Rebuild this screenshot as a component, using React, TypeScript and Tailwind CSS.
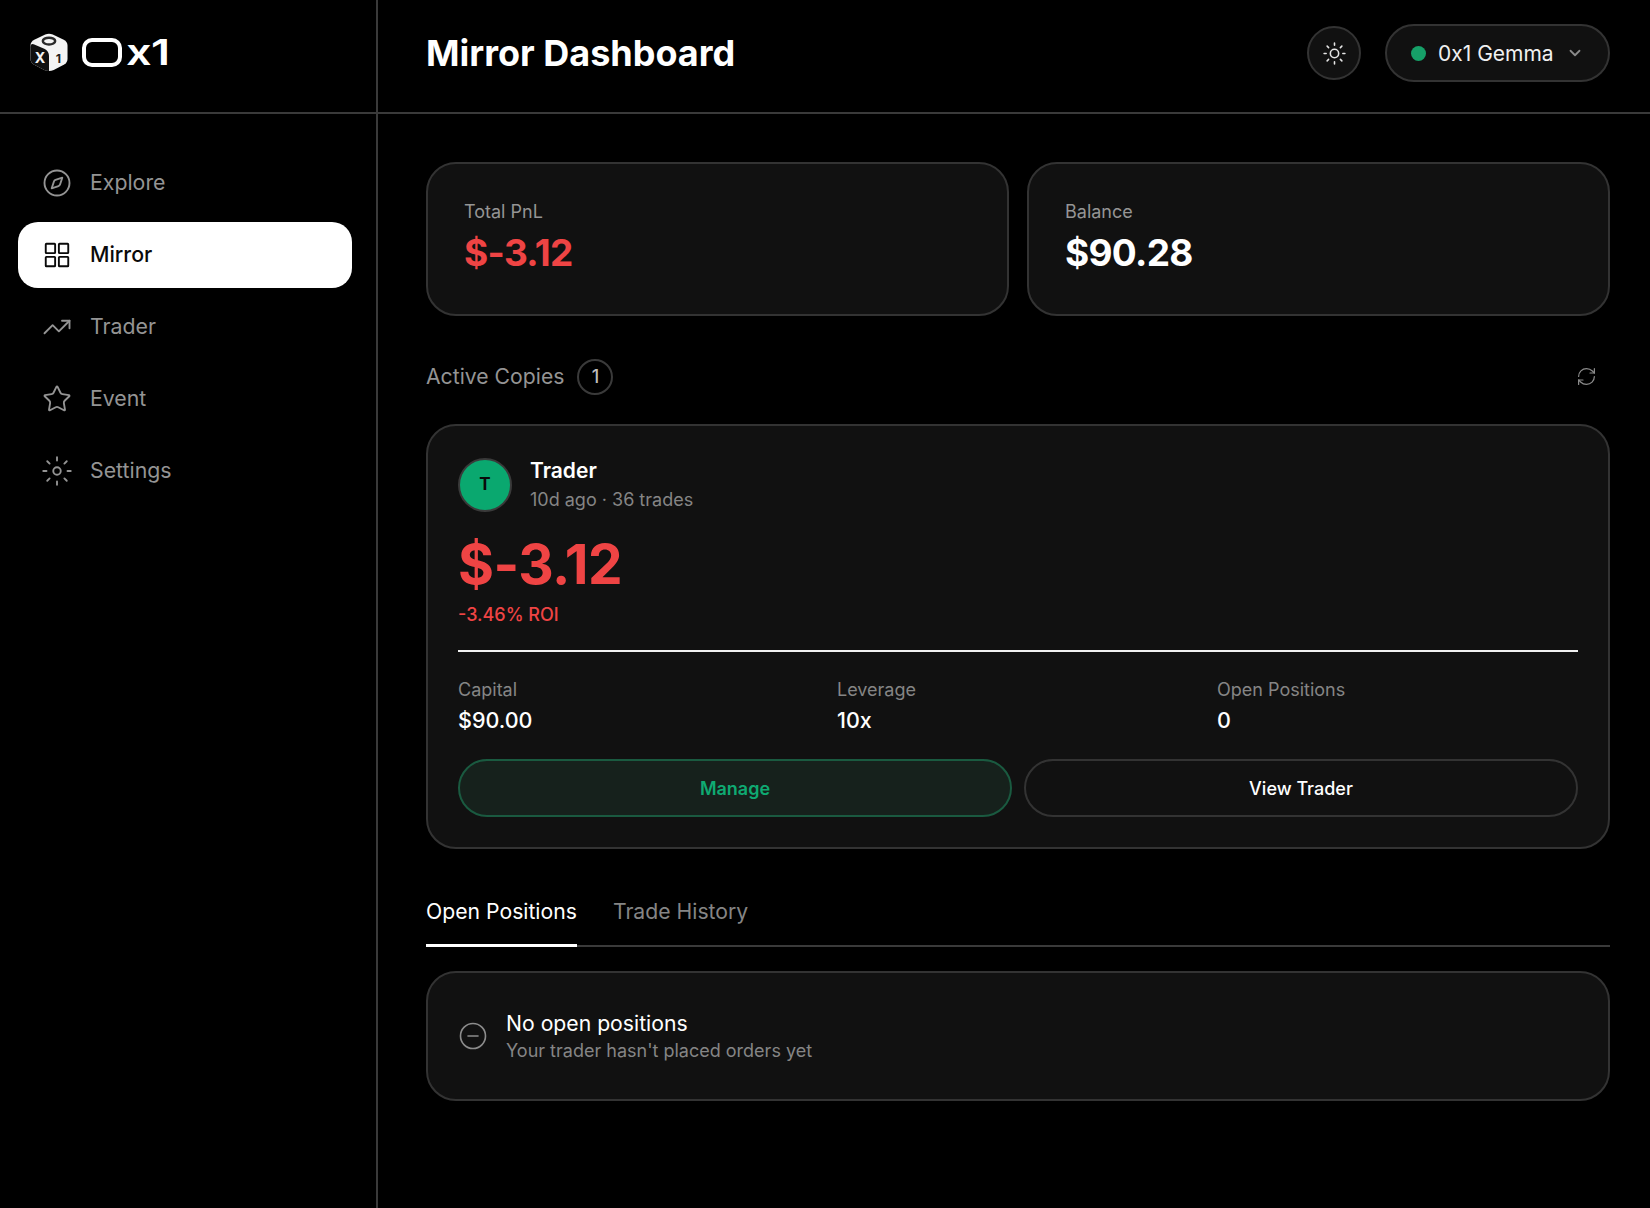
import React from "react";
import { Compass, TrendingUp, Star, Sun, ChevronDown, RefreshCw, CircleMinus } from "lucide-react";

type IconProps = { size?: number; strokeWidth?: number };

function GridIcon({ size = 30, strokeWidth = 1.5 }: IconProps) {
  return (
    <svg width={size} height={size} viewBox="0 0 24 24" fill="none" stroke="currentColor" strokeWidth={strokeWidth}>
      <rect x="3" y="3" width="7.5" height="7.5" rx="0.5" />
      <rect x="13.5" y="3" width="7.5" height="7.5" rx="0.5" />
      <rect x="3" y="13.5" width="7.5" height="7.5" rx="0.5" />
      <rect x="13.5" y="13.5" width="7.5" height="7.5" rx="0.5" />
    </svg>
  );
}

function SunWide({ size = 30, strokeWidth = 1.5 }: IconProps) {
  return (
    <svg width={size} height={size} viewBox="0 0 24 24" fill="none" stroke="currentColor" strokeWidth={strokeWidth} strokeLinecap="round">
      <circle cx="12" cy="12" r="3" />
      <path d="M12 1v2.6M12 20.4V23M1 12h2.6M20.4 12H23M4.2 4.2l1.9 1.9M17.9 17.9l1.9 1.9M4.2 19.8l1.9-1.9M17.9 6.1l1.9-1.9" />
    </svg>
  );
}

function Logo() {
  return (
    <div className="flex items-center">
      <svg width="38" height="39" viewBox="0 0 40 41" className="mr-[14px]">
        <path d="M16 1.6 Q20 -0.2 24 1.6 L35.5 7 Q39.5 9 39.5 13 L39.5 27 Q39.5 31 36 33 L25 39 Q20 41 15 39 L4 33 Q0.5 31 0.5 27 L0.5 13 Q0.5 9 4.5 7 Z" fill="#f4f4f4" />
        <path d="M0.5 15 Q0.5 10.5 4.5 12 L15 16.5 Q20 19 20 24 L20 40 Q17 40 15 39 L4 33 Q0.5 31 0.5 27 Z" fill="#101010" />
        <ellipse cx="20" cy="8.5" rx="6.5" ry="3.6" fill="none" stroke="#2a2a2a" strokeWidth="2.6" />
        <text x="10.5" y="32" fontSize="15" fontWeight="700" fill="#f4f4f4" textAnchor="middle" fontFamily="Inter, sans-serif">X</text>
        <text x="30" y="32" fontSize="13" fontWeight="700" fill="#222222" textAnchor="middle" fontFamily="Inter, sans-serif">1</text>
      </svg>
      <div className="w-[40px] h-[29px] border-[4.5px] border-white rounded-[10px] mr-[4px]" />
      <span className="text-white font-semibold text-[36px] leading-none scale-x-[1.25] origin-left tracking-[-0.5px] -mt-[1px]">x1</span>
    </div>
  );
}

const nav = [
  { label: "Explore", Icon: Compass },
  { label: "Mirror", Icon: GridIcon, active: true },
  { label: "Trader", Icon: TrendingUp },
  { label: "Event", Icon: Star },
  { label: "Settings", Icon: SunWide },
];

function Stat({ label, value, red }: { label: string; value: string; red?: boolean }) {
  return (
    <div className="flex-1 h-[154px] rounded-[30px] bg-[#111111] border-2 border-[#333333] pl-[36px] pt-[36px]">
      <div className="text-[18px] leading-[24px] text-[#959595]">{label}</div>
      <div className={`text-[37px] leading-[44px] mt-[7px] font-bold tracking-[-0.7px] ${red ? "text-[#ef4444]" : "text-white"}`}>{value}</div>
    </div>
  );
}

function Metric({ label, value }: { label: string; value: string }) {
  return (
    <div>
      <div className="text-[18px] leading-[24px] text-[#858585]">{label}</div>
      <div className="text-[21.5px] leading-[28px] mt-[4px] font-medium text-white">{value}</div>
    </div>
  );
}

export default function App() {
  return (
    <div className="w-[1650px] h-[1208px] bg-black flex flex-col overflow-hidden font-['Inter',sans-serif] text-white">
      <header className="h-[114px] shrink-0 flex border-b-2 border-[#3a3a3a]">
        <div className="w-[378px] shrink-0 border-r-2 border-[#3a3a3a] flex items-center pl-[30px] pb-[8px]">
          <Logo />
        </div>
        <div className="flex-1 flex items-center justify-between pl-[48px] pr-[40px] pb-[6px]">
          <h1 className="text-[36px] font-bold leading-none">Mirror Dashboard</h1>
          <div className="flex items-center gap-[24px]">
            <button className="w-[54px] h-[54px] rounded-full bg-[#111111] border-2 border-[#333333] flex items-center justify-center">
              <Sun size={25} strokeWidth={1.5} color="#e5e5e5" />
            </button>
            <button className="w-[225px] h-[58px] rounded-full bg-[#111111] border-2 border-[#333333] flex items-center pl-[24px]">
              <span className="w-[15px] h-[15px] rounded-full bg-[#16a068] mr-[12px]" />
              <span className="text-[21px] leading-none text-[#f0f0f0]">0x1 Gemma</span>
              <ChevronDown size={18} strokeWidth={2.4} color="#8a8a8a" className="ml-[12px]" />
            </button>
          </div>
        </div>
      </header>
      <div className="flex-1 flex min-h-0">
        <aside className="w-[378px] shrink-0 border-r-2 border-[#3a3a3a] pl-[18px] pr-[24px] pt-[36px] flex flex-col gap-[6px]">
          {nav.map(({ label, Icon, active }) => (
            <div
              key={label}
              className={`h-[66px] rounded-[20px] flex items-center pl-[24px] ${active ? "bg-white text-[#0a0a0a]" : "text-[#949494]"}`}
            >
              <Icon size={30} strokeWidth={1.5} />
              <span className={`ml-[18px] text-[21.3px] leading-none ${active ? "font-medium" : ""}`}>{label}</span>
            </div>
          ))}
        </aside>
        <main className="flex-1 pl-[48px] pr-[40px] pt-[48px]">
          <div className="flex gap-[18px]">
            <Stat label="Total PnL" value="$-3.12" red />
            <Stat label="Balance" value="$90.28" />
          </div>
          <div className="flex items-center justify-between mt-[43px] h-[35px]">
            <div className="flex items-center gap-[13px]">
              <span className="text-[21.2px] text-[#949494] leading-none">Active Copies</span>
              <span className="w-[36px] h-[36px] rounded-full border-2 border-[#3a3a3a] flex items-center justify-center text-[18px] font-medium text-[#bdbdbd]">1</span>
            </div>
            <RefreshCw size={21} strokeWidth={1.4} color="#8c8c8c" className="mr-[13px]" />
          </div>
          <section className="mt-[30px] h-[425px] rounded-[30px] bg-[#111111] border-2 border-[#333333] px-[30px] pt-[32px]">
            <div className="flex items-start">
              <div className="w-[54px] h-[54px] rounded-full bg-[#0aa86f] border-2 border-[#3a3a3a] flex items-center justify-center text-[#0a0a0a] text-[17px] font-bold">T</div>
              <div className="ml-[18px] -mt-[1px]">
                <div className="text-[21px] leading-[28px] font-semibold">Trader</div>
                <div className="text-[18px] leading-[24px] mt-[3px] text-[#858585]">10d ago · 36 trades</div>
              </div>
            </div>
            <div className="text-[55px] leading-[62px] mt-[21px] font-bold text-[#ef4444] tracking-[-0.6px]">$-3.12</div>
            <div className="text-[18px] leading-[24px] mt-[8px] font-medium text-[#ef4444]">-3.46% ROI</div>
            <div className="h-[2px] bg-[#f2f2f2] mt-[23px]" />
            <div className="grid grid-cols-[379px_380px_1fr] mt-[26px]">
              <Metric label="Capital" value="$90.00" />
              <Metric label="Leverage" value="10x" />
              <Metric label="Open Positions" value="0" />
            </div>
            <div className="flex gap-[12px] mt-[25px]">
              <button className="flex-1 h-[58px] rounded-full bg-[#16211c] border-2 border-[#1a5a40] text-[#0faa72] text-[18px] font-semibold">Manage</button>
              <button className="flex-1 h-[58px] rounded-full border-2 border-[#333333] text-white text-[18px] font-medium">View Trader</button>
            </div>
          </section>
          <div className="flex gap-[36px] mt-[41px] border-b-2 border-[#3a3a3a] h-[57px]">
            <div className="h-[57px] pt-[7px] border-b-[3px] border-white text-[21.2px] leading-[28px]">Open Positions</div>
            <div className="pt-[7px] text-[21.2px] leading-[28px] text-[#858585]">Trade History</div>
          </div>
          <section className="mt-[24px] h-[130px] rounded-[30px] bg-[#111111] border-2 border-[#333333] flex items-center pl-[30px]">
            <CircleMinus size={30} strokeWidth={1.3} color="#8c8c8c" />
            <div className="ml-[18px] pt-[1px]">
              <div className="text-[21.2px] leading-[26px]">No open positions</div>
              <div className="text-[18px] leading-[26px] mt-[2px] text-[#858585]">Your trader hasn't placed orders yet</div>
            </div>
          </section>
        </main>
      </div>
    </div>
  );
}
